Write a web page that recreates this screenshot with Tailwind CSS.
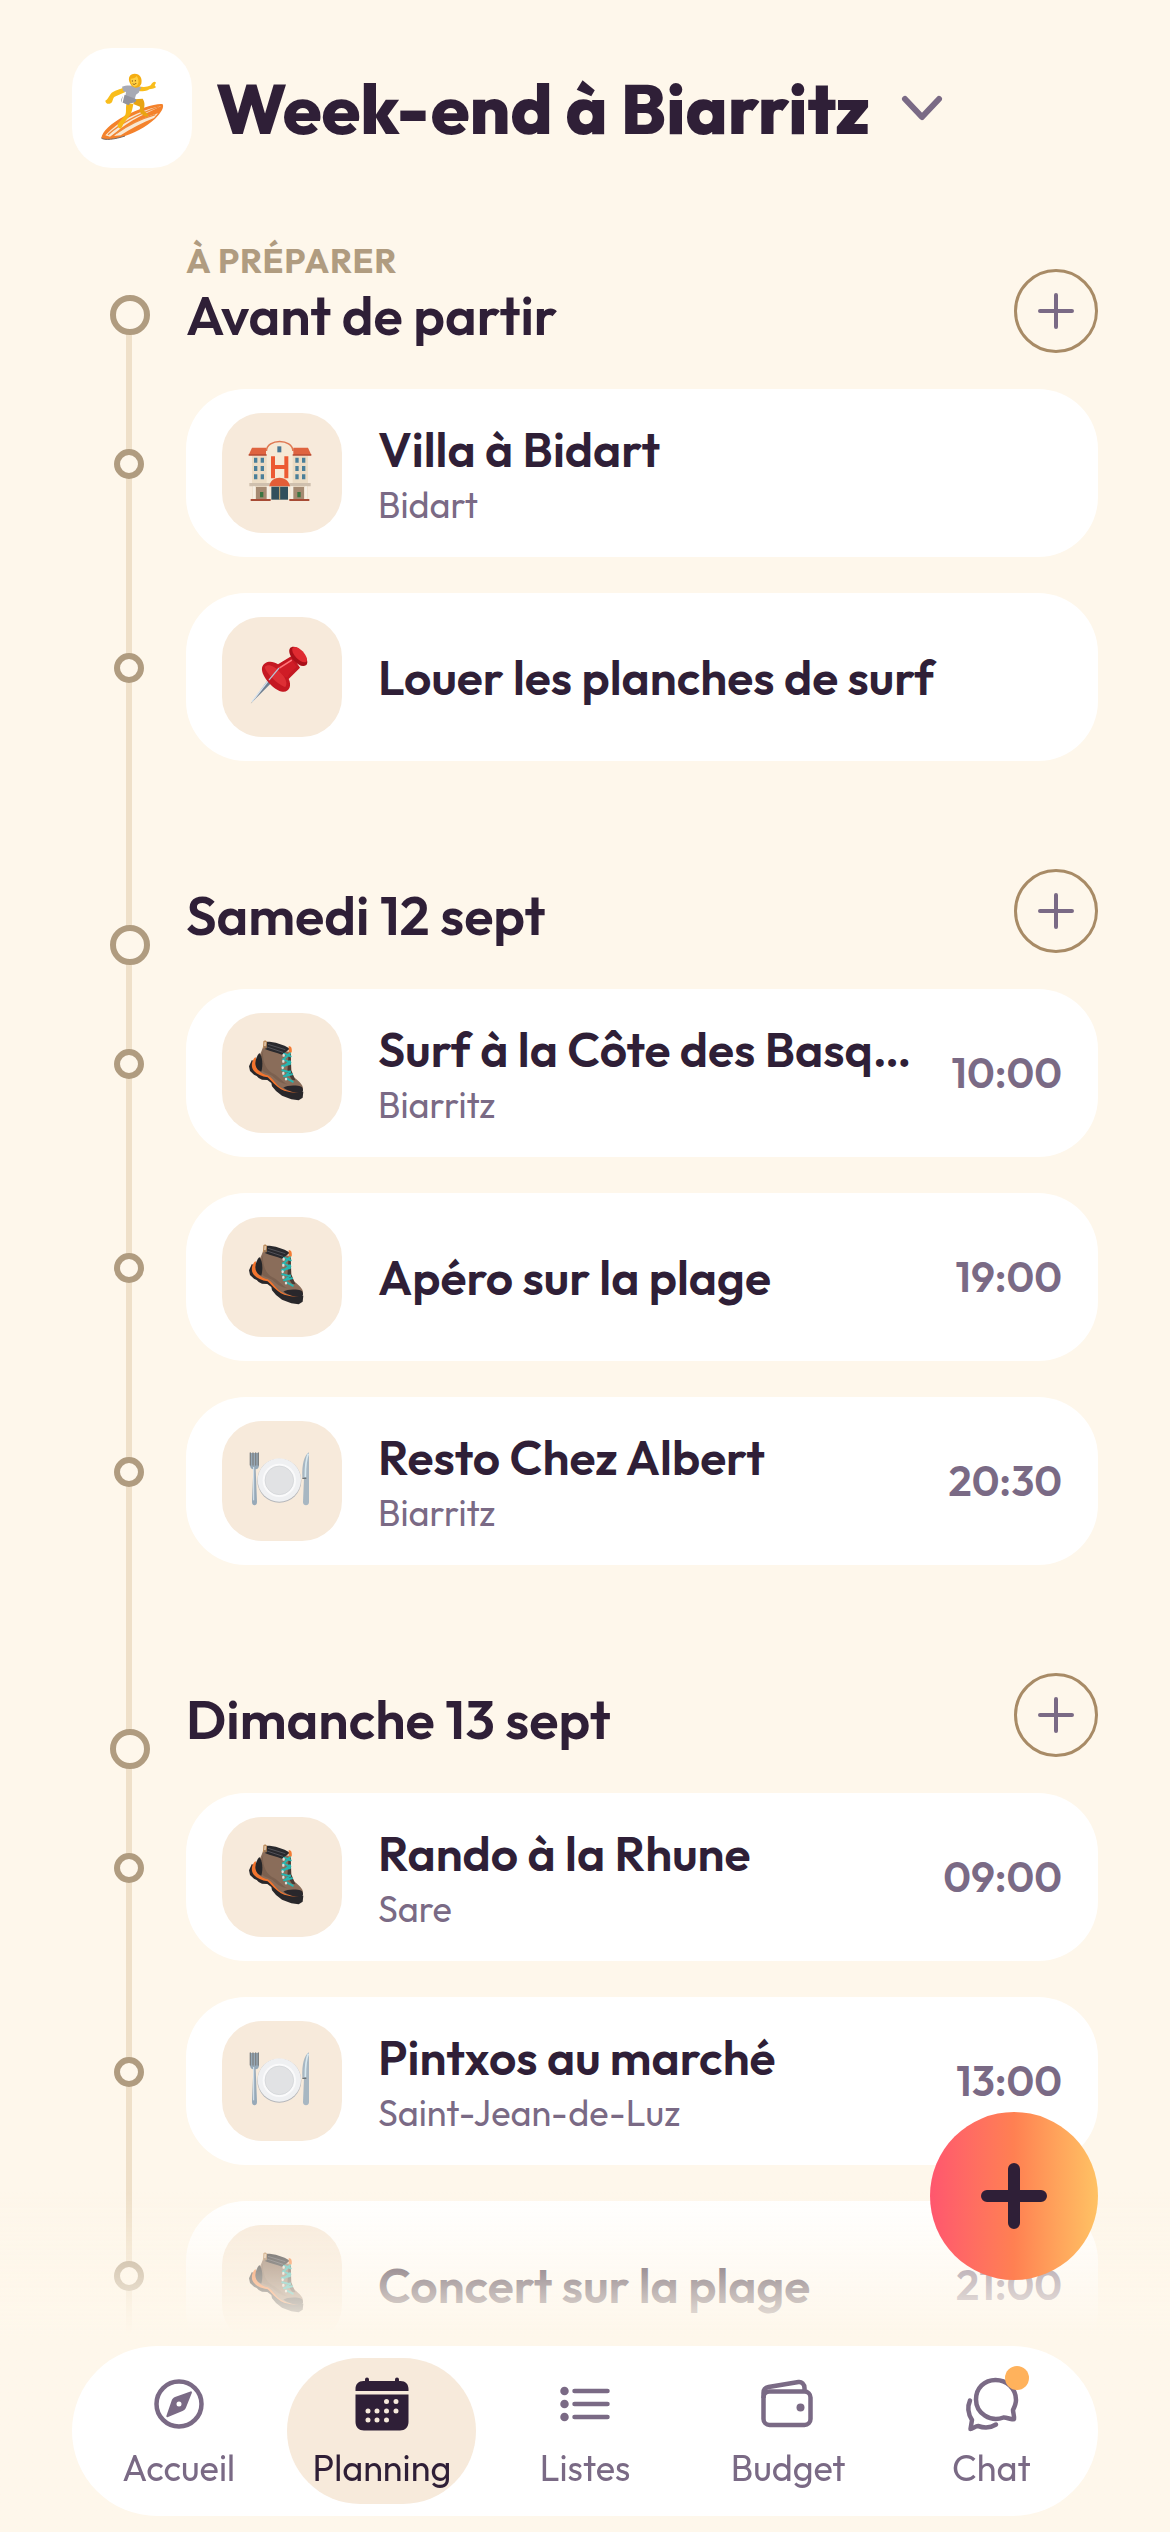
<!DOCTYPE html>
<html lang="fr">
<head>
    <meta charset="UTF-8">
    <meta name="viewport" content="width=device-width, initial-scale=1.0">
    <title>Planning - Week-end à Biarritz</title>
    <script src="https://cdn.jsdelivr.net/npm/@tailwindcss/browser@4"></script>
</head>
<body class="min-h-screen bg-[#fef7eb] font-['Outfit','Lato',sans-serif] text-[#2f1f37]">

    <!-- Shared icons -->
    <svg class="hidden" aria-hidden="true">
        <symbol id="icon-plus" viewBox="0 0 36 36">
            <path d="M18 2v32M2 18h32" fill="none" stroke="#7a6a85" stroke-width="4" stroke-linecap="round"/>
        </symbol>
        <symbol id="icon-boot" viewBox="0 42 300 300">
            <path d="M60 152 51 172 54 186 66 197 74 201 80 207 90 212 106 213 118 222 120 232 132 246 150 260 178 271 200 274 212 266 214 248 190 240 150 226 112 200 88 188Z" fill="#29272a"/>
            <path d="M70 144c-9 8-13 22-9 34 6 14 24 24 46 27 12 12 24 26 40 36 18 9 38 11 54 8l-4-12-40-8-80-70Z" fill="#f2742e"/>
            <path d="M94 110 176 130c2 20-2 44 2 62 4 14 24 22 33 38 4 10 2 18-6 19-26 2-50-4-68-20-10-10-18-24-30-30-14-4-28-10-34-26-2-20 16-40 21-63Z" fill="#8a6d5a"/>
            <path d="M94 124c-4 24 4 56 26 68 16 6 30 26 46 34-20-2-34-14-44-24-12-8-28-10-40-24-4-18 6-36 12-54Z" fill="#7b604f"/>
            <path d="M82 132c9 10 12 34 6 56-12-4-18-14-18-26 1-12 5-22 12-30Z" fill="#252528"/>
            <path d="M104 98c24 0 50 8 70 21l-24 18c-16-6-34-10-50-16Z" fill="#29292d"/>
            <path d="m108 106 52 16M105 114l48 16" fill="none" stroke="#515157" stroke-width="3"/>
            <path d="M95 118 96 98c2-3 7-1 7 2l-1 18" fill="none" stroke="#b98958" stroke-width="4"/>
            <path d="M170 112c6-2 11 4 9 18l-9 4Z" fill="#f37b33"/>
            <path d="M154 236c12-8 42-8 56-2 4 8 5 14-3 16-20 3-42-6-53-14Z" fill="#29272b"/>
            <path d="m170 132-4 58 14 22 10 2-12-30-2-50Z" fill="#4b3b34"/>
            <path d="m156 134 20 8M153 151l22 9M150 171l24-6M151 184l23 6M156 202l24-6M164 208l18 10M174 133l-18 17M174 157l-20 17M174 187l-14 14" fill="none" stroke="#28b5b0" stroke-width="6" stroke-linecap="round"/>
            <path d="M155 138v2M154 156v2M152 175v2M154 192v2M162 210v1" fill="none" stroke="#e2ded8" stroke-width="7" stroke-linecap="round"/>
        </symbol>
        <symbol id="icon-plate" viewBox="0 0 300 300">
            <circle cx="142" cy="149" r="66" fill="#b4b6ba"/>
            <circle cx="142" cy="147" r="65" fill="#eff0f2"/>
            <circle cx="142" cy="148" r="50" fill="#fafafb"/>
            <circle cx="142" cy="148" r="43" fill="#e1e2e4" stroke="#cfd1d4" stroke-width="2"/>
            <path d="M54 66v36c0 8 4 12 10 13l-4 98c0 13 15 13 15 0l-4-98c7-1 10-5 10-13V66" fill="#97a9b8"/>
            <path d="M55 66v36M63 66v36M71 66v36M79 66v36" fill="none" stroke="#7f8284" stroke-width="4" stroke-linecap="round"/>
            <path d="M65 108v100" stroke="#dbe8f1" stroke-width="3"/>
            <path d="M231 64c-14 8-22 36-20 76h5l-3 74c0 12 18 12 18 0Z" fill="#a8b7c2"/>
            <path d="M229 68c-7 16-9 38-9 70" fill="none" stroke="#d7e8ef" stroke-width="5"/>
            <path d="M211 142h12" stroke="#6d7376" stroke-width="4"/>
        </symbol>
    </svg>

    <header class="px-[72px] pt-12">
        <button class="flex items-center gap-6">
            <span class="flex size-[120px] items-center justify-center rounded-[40px] bg-white">
                <svg class="size-[100px]" viewBox="0 0 300 300" aria-hidden="true">
                    <path d="M58 240c2-18 28-44 70-66 42-22 90-38 113-36 6 6 0 20-12 34-24 28-62 50-100 62-30 10-62 14-71 6Z" fill="#f4822c"/>
                    <path d="M70 232c38-42 100-74 158-86l10-2c-44 22-94 42-138 80l-16 12ZM96 234c34-30 80-52 132-68l-12 14c-36 14-70 32-100 52Z" fill="#f8e8d3"/>
                    <path d="M78 230c40-36 92-62 154-84M104 226c36-26 74-44 116-56" fill="none" stroke="#f08a3a" stroke-width="4"/>
                    <path d="M58 240c9 8 41 4 71-6" fill="none" stroke="#7b6a62" stroke-width="3"/>
                    <path d="M134 134c-4 16 0 26-4 36l-18 22c-8 8-6 18 4 20 6-4 6-14 12-20l16-20c6-10 8-24 10-34Z" fill="#f7b717"/>
                    <path d="m158 124 24-2c8 12 6 24 2 34l16 16c-4 6-12 4-18-2-12-8-8-16-8-24l-20-8Z" fill="#e8a412"/>
                    <path d="M122 90c-14 6-28 8-36 18-6 8-8 16-16 20 0 8 8 12 16 8 8-4 4-14 12-20l32-14ZM168 84c14 4 26 4 38-2 8-12 12-12 16-8l-4 8 4 6c-8 6-14 4-20 6-12 8-24 6-34 4Z" fill="#f9bd1c"/>
                    <path d="M120 86c14-6 38-4 58 2l-8 16-8 6-4 14-28-8 2-14-8-2Z" fill="#a7a9b4"/>
                    <path d="m128 110 32 12c6 4 2 10-6 12l-10 2-4 6-22-10c-2-10 4-18 10-22Z" fill="#92939e"/>
                    <path d="m126 108-6 26" stroke="#fff" stroke-width="4"/>
                    <path d="M144 76c-8-18 0-28 14-29 16 0 24 14 20 30-6 14-26 18-34-1Z" fill="#f5ae12"/>
                    <path d="M146 62c8 0 14-2 18-8 6 8 8 20 2 28-8 8-20 2-20-20Z" fill="#ffd044"/>
                    <path d="M151 68v2M160 67v2M153 78c4 2 6 2 9-2" fill="none" stroke="#7a4a10" stroke-width="2.500" stroke-linecap="round"/>
                </svg>
            </span>
            <h1 class="text-[70px] leading-[80px] font-extrabold whitespace-nowrap">Week-end à Biarritz</h1>
            <svg class="ml-1 h-7 w-12" viewBox="0 0 48 28" fill="none" aria-hidden="true">
                <path d="m7 5 17 18L41 5" stroke="#7a6a85" stroke-width="6" stroke-linecap="round" stroke-linejoin="round"/>
            </svg>
        </button>
    </header>

    <main class="relative mt-[77px] flex flex-col gap-[108px] px-[72px]">
        <div class="absolute top-20 bottom-0 left-[126px] w-1.5 bg-[#efe0c9]"></div>

        <!-- À préparer -->
        <section>
            <div class="relative flex">
                <div class="flex w-[116px] shrink-0 items-end justify-center pb-[54px]">
                    <span class="size-10 rounded-full border-[6px] border-[#b09c80] bg-[#fef7eb]"></span>
                </div>
                <div class="-ml-0.5 flex grow items-end justify-between pb-9">
                    <div class="flex flex-col gap-3.5 pb-3.5">
                        <p class="text-[34px] leading-8 font-bold tracking-wide text-[#b09c80]">À PRÉPARER</p>
                        <h2 class="text-[54px] leading-[48px] font-semibold">Avant de partir</h2>
                    </div>
                    <button class="flex size-21 items-center justify-center rounded-full border-[3px] border-[#a88b66]" aria-label="Ajouter avant le départ">
                        <svg class="size-9"><use href="#icon-plus"/></svg>
                    </button>
                </div>
            </div>
            <ul class="relative flex flex-col gap-9">
                <li class="flex">
                    <div class="flex w-[114px] shrink-0 justify-center pt-[60px]">
                        <span class="size-[30px] rounded-full border-[6px] border-[#b09c80] bg-[#fef7eb]"></span>
                    </div>
                    <a href="#" class="flex min-w-0 grow items-center gap-9 rounded-[60px] bg-white px-9 py-6">
                        <span class="flex size-[120px] shrink-0 items-center justify-center rounded-[40px] bg-[#f7eadb]">
                            <svg class="size-[100px]" viewBox="0 0 300 300" aria-hidden="true">
                                <path d="M60 98h168v132H60Z" fill="#ecdcc4"/>
                                <path d="M104 228V88c0-42 78-42 78 0v140Z" fill="#f6e9d5"/>
                                <path d="M103 84c2-38 78-38 80 0" fill="none" stroke="#df7953" stroke-width="5"/>
                                <path d="M50 96 60 74h42v22ZM238 96l-10-22h-44v22Z" fill="#df6440"/>
                                <path d="M50 96h54M182 96h56" stroke="#b54a31" stroke-width="5"/>
                                <path d="M136 70h12v18h-12Z" fill="#497793"/>
                                <path d="M66 104h10v15H66ZM86 104h10v15H86ZM66 129h10v15H66ZM86 129h10v15H86ZM66 154h10v15H66ZM86 154h10v15H86ZM190 104h10v15h-10ZM210 104h10v15h-10ZM190 129h10v15h-10ZM210 129h10v15h-10ZM190 154h10v15h-10ZM210 154h10v15h-10Z" fill="#4a7f99"/>
                                <path d="M123 100v66M163 100v66M123 132h40" fill="none" stroke="#ec5a33" stroke-width="12"/>
                                <path d="M52 180h64v10H52ZM172 180h64v10h-64Z" fill="#cfc0ae"/>
                                <path d="M72 192h34v36H72ZM182 192h34v36h-34Z" fill="#a58a72"/>
                                <path d="M62 190h8v40h-8ZM104 190h8v40h-8ZM176 190h8v40h-8ZM218 190h8v40h-8Z" fill="#f5eee3"/>
                                <path d="M112 190c4-34 56-34 62 0Z" fill="#e35d37"/>
                                <path d="M118 191h50v39h-50Z" fill="#31505c"/>
                                <path d="M143 191v39" stroke="#d4b273" stroke-width="3"/>
                                <path d="M84 207h10v16H84ZM196 207h10v16h-10Z" fill="#3b7441"/>
                                <path d="M56 231h60M172 231h60" stroke="#a74b35" stroke-width="6"/>
                            </svg>
                        </span>
                        <span class="flex min-w-0 grow flex-col gap-0.5 pt-0.5">
                            <span class="truncate text-[48px] leading-[60px] font-semibold">Villa à Bidart</span>
                            <span class="text-[36px] leading-[48px] text-[#7a6a85]">Bidart</span>
                        </span>
                    </a>
                </li>
                <li class="flex">
                    <div class="flex w-[114px] shrink-0 justify-center pt-[60px]">
                        <span class="size-[30px] rounded-full border-[6px] border-[#b09c80] bg-[#fef7eb]"></span>
                    </div>
                    <a href="#" class="flex min-w-0 grow items-center gap-9 rounded-[60px] bg-white px-9 py-6">
                        <span class="flex size-[120px] shrink-0 items-center justify-center rounded-[40px] bg-[#f7eadb]">
                            <svg class="size-[100px]" viewBox="0 0 300 300" aria-hidden="true">
                                <path d="m56 230 58-80 12 10Z" fill="#6f7f90"/>
                                <path d="m60 224 56-72" stroke="#d8e3ee" stroke-width="4"/>
                                <path d="M90 122c6-20 30-22 48-10l42-26 24 36-34 34c10 20 2 40-18 38-24-2-66-46-62-72Z" fill="#c41822"/>
                                <path d="M98 120c10-12 28-2 46 14 16 16 24 34 16 46-18-4-56-38-62-60Z" fill="#dd2f35"/>
                                <path d="M136 120c14-4 26-14 40-24l18 24c-10 8-20 16-28 30-6 6-34-24-30-30Z" fill="#cf1c26"/>
                                <path d="M174 64c6-8 22-6 36 10 15 16 20 33 13 40-10 8-25 0-36-12-13-14-19-29-13-38Z" fill="#a90f19"/>
                                <path d="M182 62c8-6 20 0 30 11 10 12 16 24 11 31-7 5-20-2-30-12-10-11-15-23-11-30Z" fill="#df2a31"/>
                                <path d="m144 122 34-22" stroke="#ff777a" stroke-width="5" stroke-linecap="round"/>
                                <path d="m112 158 28-34" stroke="#b8c3d6" stroke-width="4" stroke-linecap="round"/>
                            </svg>
                        </span>
                        <span class="min-w-0 grow truncate text-[48px] leading-[60px] font-semibold">Louer les planches de surf</span>
                    </a>
                </li>
            </ul>
        </section>

        <!-- Samedi -->
        <section>
            <div class="relative flex">
                <div class="flex w-[116px] shrink-0 items-end justify-center pb-6">
                    <span class="size-10 rounded-full border-[6px] border-[#b09c80] bg-[#fef7eb]"></span>
                </div>
                <div class="-ml-0.5 flex grow items-end justify-between pb-9">
                    <h2 class="pb-3.5 text-[54px] leading-[48px] font-semibold">Samedi 12 sept</h2>
                    <button class="flex size-21 items-center justify-center rounded-full border-[3px] border-[#a88b66]" aria-label="Ajouter samedi">
                        <svg class="size-9"><use href="#icon-plus"/></svg>
                    </button>
                </div>
            </div>
            <ul class="relative flex flex-col gap-9">
                <li class="flex">
                    <div class="flex w-[114px] shrink-0 justify-center pt-[60px]">
                        <span class="size-[30px] rounded-full border-[6px] border-[#b09c80] bg-[#fef7eb]"></span>
                    </div>
                    <a href="#" class="flex min-w-0 grow items-center gap-9 rounded-[60px] bg-white px-9 py-6">
                        <span class="flex size-[120px] shrink-0 items-center justify-center rounded-[40px] bg-[#f7eadb]">
                            <svg class="size-[100px]"><use href="#icon-boot"/></svg>
                        </span>
                        <span class="flex min-w-0 grow flex-col gap-0.5 pt-0.5">
                            <span class="truncate text-[48px] leading-[60px] font-semibold">Surf à la Côte des Basques</span>
                            <span class="text-[36px] leading-[48px] text-[#7a6a85]">Biarritz</span>
                        </span>
                        <time class="text-[42px] leading-[60px] font-semibold text-[#7a6a85]">10:00</time>
                    </a>
                </li>
                <li class="flex">
                    <div class="flex w-[114px] shrink-0 justify-center pt-[60px]">
                        <span class="size-[30px] rounded-full border-[6px] border-[#b09c80] bg-[#fef7eb]"></span>
                    </div>
                    <a href="#" class="flex min-w-0 grow items-center gap-9 rounded-[60px] bg-white px-9 py-6">
                        <span class="flex size-[120px] shrink-0 items-center justify-center rounded-[40px] bg-[#f7eadb]">
                            <svg class="size-[100px]"><use href="#icon-boot"/></svg>
                        </span>
                        <span class="min-w-0 grow truncate text-[48px] leading-[60px] font-semibold">Apéro sur la plage</span>
                        <time class="text-[42px] leading-[60px] font-semibold text-[#7a6a85]">19:00</time>
                    </a>
                </li>
                <li class="flex">
                    <div class="flex w-[114px] shrink-0 justify-center pt-[60px]">
                        <span class="size-[30px] rounded-full border-[6px] border-[#b09c80] bg-[#fef7eb]"></span>
                    </div>
                    <a href="#" class="flex min-w-0 grow items-center gap-9 rounded-[60px] bg-white px-9 py-6">
                        <span class="flex size-[120px] shrink-0 items-center justify-center rounded-[40px] bg-[#f7eadb]">
                            <svg class="size-[100px]"><use href="#icon-plate"/></svg>
                        </span>
                        <span class="flex min-w-0 grow flex-col gap-0.5 pt-0.5">
                            <span class="truncate text-[48px] leading-[60px] font-semibold">Resto Chez Albert</span>
                            <span class="text-[36px] leading-[48px] text-[#7a6a85]">Biarritz</span>
                        </span>
                        <time class="text-[42px] leading-[60px] font-semibold text-[#7a6a85]">20:30</time>
                    </a>
                </li>
            </ul>
        </section>

        <!-- Dimanche -->
        <section>
            <div class="relative flex">
                <div class="flex w-[116px] shrink-0 items-end justify-center pb-6">
                    <span class="size-10 rounded-full border-[6px] border-[#b09c80] bg-[#fef7eb]"></span>
                </div>
                <div class="-ml-0.5 flex grow items-end justify-between pb-9">
                    <h2 class="pb-3.5 text-[54px] leading-[48px] font-semibold">Dimanche 13 sept</h2>
                    <button class="flex size-21 items-center justify-center rounded-full border-[3px] border-[#a88b66]" aria-label="Ajouter dimanche">
                        <svg class="size-9"><use href="#icon-plus"/></svg>
                    </button>
                </div>
            </div>
            <ul class="relative flex flex-col gap-9">
                <li class="flex">
                    <div class="flex w-[114px] shrink-0 justify-center pt-[60px]">
                        <span class="size-[30px] rounded-full border-[6px] border-[#b09c80] bg-[#fef7eb]"></span>
                    </div>
                    <a href="#" class="flex min-w-0 grow items-center gap-9 rounded-[60px] bg-white px-9 py-6">
                        <span class="flex size-[120px] shrink-0 items-center justify-center rounded-[40px] bg-[#f7eadb]">
                            <svg class="size-[100px]"><use href="#icon-boot"/></svg>
                        </span>
                        <span class="flex min-w-0 grow flex-col gap-0.5 pt-0.5">
                            <span class="truncate text-[48px] leading-[60px] font-semibold">Rando à la Rhune</span>
                            <span class="text-[36px] leading-[48px] text-[#7a6a85]">Sare</span>
                        </span>
                        <time class="text-[42px] leading-[60px] font-semibold text-[#7a6a85]">09:00</time>
                    </a>
                </li>
                <li class="flex">
                    <div class="flex w-[114px] shrink-0 justify-center pt-[60px]">
                        <span class="size-[30px] rounded-full border-[6px] border-[#b09c80] bg-[#fef7eb]"></span>
                    </div>
                    <a href="#" class="flex min-w-0 grow items-center gap-9 rounded-[60px] bg-white px-9 py-6">
                        <span class="flex size-[120px] shrink-0 items-center justify-center rounded-[40px] bg-[#f7eadb]">
                            <svg class="size-[100px]"><use href="#icon-plate"/></svg>
                        </span>
                        <span class="flex min-w-0 grow flex-col gap-0.5 pt-0.5">
                            <span class="truncate text-[48px] leading-[60px] font-semibold">Pintxos au marché</span>
                            <span class="text-[36px] leading-[48px] text-[#7a6a85]">Saint-Jean-de-Luz</span>
                        </span>
                        <time class="text-[42px] leading-[60px] font-semibold text-[#7a6a85]">13:00</time>
                    </a>
                </li>
                <li class="flex">
                    <div class="flex w-[114px] shrink-0 justify-center pt-[60px]">
                        <span class="size-[30px] rounded-full border-[6px] border-[#b09c80] bg-[#fef7eb]"></span>
                    </div>
                    <a href="#" class="flex min-w-0 grow items-center gap-9 rounded-[60px] bg-white px-9 py-6">
                        <span class="flex size-[120px] shrink-0 items-center justify-center rounded-[40px] bg-[#f7eadb]">
                            <svg class="size-[100px]"><use href="#icon-boot"/></svg>
                        </span>
                        <span class="min-w-0 grow truncate text-[48px] leading-[60px] font-semibold">Concert sur la plage</span>
                        <time class="text-[42px] leading-[60px] font-semibold text-[#7a6a85]">21:00</time>
                    </a>
                </li>
            </ul>
        </section>
    </main>

    <!-- Fade above the tab bar -->
    <div class="pointer-events-none fixed inset-x-0 bottom-0 h-[340px] bg-linear-to-b from-[#fef7eb]/0 to-[#fef7eb] to-42%"></div>

    <button class="fixed right-[72px] bottom-63 flex size-42 items-center justify-center rounded-full bg-linear-to-r from-[#ff566e] via-[#ff8052] to-[#ffc264]" aria-label="Ajouter une activité">
        <svg class="size-[66px]" viewBox="0 0 66 66" aria-hidden="true">
            <path d="M33 6v54M6 33h54" fill="none" stroke="#2f1f37" stroke-width="12" stroke-linecap="round"/>
        </svg>
    </button>

    <!-- Tab bar -->
    <nav class="fixed inset-x-[72px] bottom-4 flex gap-[14px] rounded-full bg-white p-3 text-[36px] leading-[48px] text-[#7a6a85]">
        <a href="#" class="flex flex-1 flex-col items-center gap-2.5 pt-4 pb-3">
            <svg class="size-[60px]" viewBox="0 0 60 60" aria-hidden="true">
                <circle cx="30" cy="30" r="22.500" fill="none" stroke="currentColor" stroke-width="4.500"/>
                <path fill-rule="evenodd" d="M41.500 17.500 26 23c-2 1-3 2-3.500 4L17.500 41.500c-.5 1.500.5 2 1.500 1.500L33.500 37c2-1 3-2 3.500-3.500L42.800 19c.5-1-.3-2-1.300-1.500ZM30 27.500a2.500 2.500 0 1 1 0 5 2.500 2.500 0 0 1 0-5Z" fill="currentColor"/>
            </svg>
            Accueil
        </a>
        <a href="#" class="flex flex-1 flex-col items-center gap-2.5 rounded-full bg-[#f7eadb] pt-4 pb-3 text-[#2f1f37]" aria-current="page">
            <svg class="size-[60px]" viewBox="0 0 60 60" aria-hidden="true">
                <path d="M15 5.500V11M45 5.500V11" stroke="currentColor" stroke-width="4" stroke-linecap="round"/>
                <path d="M3.500 17v-2c0-5 3-8 8-8h37c5 0 8 3 8 8v2ZM3.500 20.500h53V48c0 5-3.500 8.500-8.500 8.500H12c-5 0-8.500-3.500-8.500-8.500Z" fill="currentColor"/>
                <path d="M34.500 27.500h0M44 27.500h0M16 37h0M25 37h0M34.500 37h0M44 37h0M16 46h0M25 46h0M34.500 46h0" stroke="#f7eadb" stroke-width="5" stroke-linecap="round"/>
            </svg>
            Planning
        </a>
        <a href="#" class="flex flex-1 flex-col items-center gap-2.5 pt-4 pb-3">
            <svg class="size-[60px]" viewBox="0 0 60 60" aria-hidden="true">
                <path d="M19.500 17h33M19.500 30h33M19.500 43h33" stroke="currentColor" stroke-width="4.500" stroke-linecap="round"/>
                <path d="M9.500 17h0M9.500 30h0M9.500 43h0" stroke="currentColor" stroke-width="8.500" stroke-linecap="round"/>
            </svg>
            Listes
        </a>
        <a href="#" class="flex flex-1 flex-col items-center gap-2.5 pt-4 pb-3">
            <svg class="size-[60px]" viewBox="0 0 60 60" aria-hidden="true">
                <g fill="none" stroke="currentColor" stroke-width="4.500" stroke-linejoin="round">
                    <rect x="5.500" y="17.500" width="47" height="33.500" rx="6"/>
                    <path d="M5.500 24v-5c0-3.500 2-5.500 5-6l30-5c3-.5 6 2 6 6v3"/>
                </g>
                <circle cx="42.500" cy="33.500" r="4" fill="currentColor"/>
            </svg>
            Budget
        </a>
        <a href="#" class="flex flex-1 flex-col items-center gap-2.5 pt-4 pb-3">
            <span class="relative">
                <svg class="size-[60px]" viewBox="0 0 60 60" fill="none" aria-hidden="true">
                    <path d="M42.500 43.500c-13 5-27.500-4-27.500-18C15 14 23.500 6 34.500 6S55 14.500 55 26c0 4-1.500 7-3 10 0 3 1.500 6 1 9-.5 1.500-8-2-10.500-1.500Z" stroke="currentColor" stroke-width="4.500" stroke-linejoin="round"/>
                    <path d="M9 26.500c-3.500 8-1.500 14 2 19.500L9.500 55c2 0 5-3 7.500-3 6 2 12.500 2 18-1.500" stroke="currentColor" stroke-width="4.500" stroke-linecap="round" stroke-linejoin="round"/>
                </svg>
                <span class="absolute -top-2 -right-2 size-6 rounded-full bg-[#ffb25c]"></span>
            </span>
            Chat
        </a>
    </nav>

</body>
</html>
